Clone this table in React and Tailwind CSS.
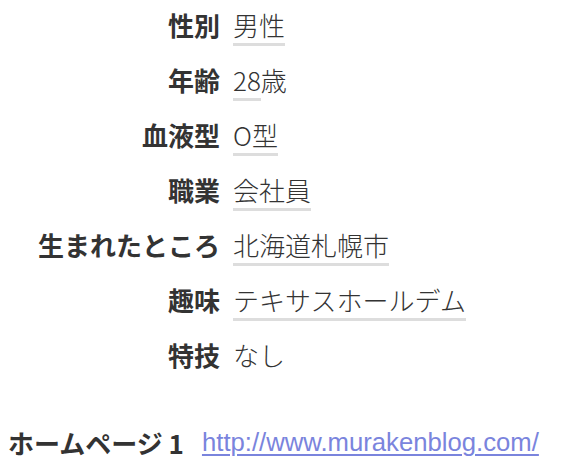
const profile = [
  { label: "性別", value: "男性" },
  { label: "年齢", value: "28", suffix: "歳" },
  { label: "血液型", value: "O型" },
  { label: "職業", value: "会社員" },
  { label: "生まれたところ", value: "北海道札幌市" },
  { label: "趣味", value: "テキサスホールデム" },
  { label: "特技", plain: "なし" },
];

const App = () => {
  return (
    <div className="min-h-[469px] bg-white text-[#333] text-[26px] font-['Noto_Sans_CJK_JP',sans-serif]">
      {/* Profile rows */}
      <div className="flex flex-col">
        {profile.map((item) => (
          <div key={item.label} className="flex h-[55px] leading-[49px]">
            <div className="w-[220px] shrink-0 text-right font-bold">{item.label}</div>
            <div className="ml-[13px] whitespace-nowrap font-light">
              {item.value && (
                <span className="border-b-[3px] border-[#dddddd]">{item.value}</span>
              )}
              {item.suffix}
              {item.plain}
            </div>
          </div>
        ))}
      </div>

      {/* Homepage */}
      <div className="mt-[33px] flex pl-2 leading-[49px]">
        <span className="font-bold">ホームページ 1</span>
        <a
          href="#"
          className="ml-[18px] text-[#7a84dd] underline decoration-[2px] underline-offset-[3px] font-['Liberation_Sans',Arial,sans-serif] text-[25.7px]"
        >
          http://www.murakenblog.com/
        </a>
      </div>
    </div>
  );
};

export default App;
